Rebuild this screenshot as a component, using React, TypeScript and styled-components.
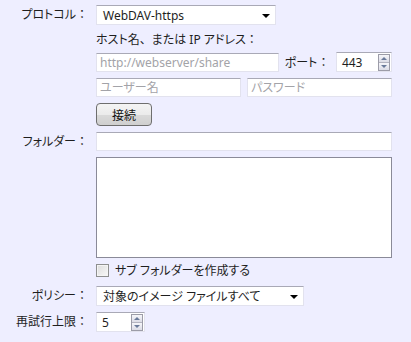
import React from "react";
import styled, { createGlobalStyle } from "styled-components";

const GlobalStyle = createGlobalStyle`
  body {
    margin: 0;
    background: #eeeeff;
    font-family: "Noto Sans", "Noto Sans CJK JP", sans-serif;
    font-size: 12px;
    color: #1e1e1e;
  }
`;

const Form = styled.div`
  display: grid;
  grid-template-columns: 88px 296px;
  column-gap: 8px;
  row-gap: 6px;
  align-items: center;
  padding-top: 5px;
`;

// proportional kana, punctuation kept full width outside of it
const P = styled.span`
  font-feature-settings: "palt";
`;

const Label = styled.div`
  text-align: right;
  white-space: nowrap;
  line-height: 16px;
`;

const Caption = styled.div`
  white-space: nowrap;
  height: 15px;
  line-height: 18px;
`;

const Sunken = styled.div<{ $w?: number; $h?: number }>`
  box-sizing: border-box;
  width: ${(p) => (p.$w ? `${p.$w}px` : "100%")};
  height: ${(p) => p.$h ?? 19}px;
  background: #fff;
  border: 1px solid #e2e2ee;
  border-top-color: #a9a9b6;
`;

const Input = styled.input<{ $w?: number }>`
  box-sizing: border-box;
  width: ${(p) => (p.$w ? `${p.$w}px` : "100%")};
  height: 19px;
  margin: 0;
  padding: 0 3px;
  background: #fff;
  border: 1px solid #e2e2ee;
  border-top-color: #a9a9b6;
  font: inherit;
  color: #1e1e1e;
  outline: none;
  font-feature-settings: "palt";
  &::placeholder {
    color: #a3a3a8;
  }
`;

const SelectBox = styled(Sunken)`
  display: flex;
  align-items: center;
  justify-content: space-between;
  padding: 0 5px 0 6px;
`;

const Arrow = styled.span`
  width: 0;
  height: 0;
  border-left: 4px solid transparent;
  border-right: 4px solid transparent;
  border-top: 4px solid #000;
  margin-top: 1px;
`;

const SpinBox = styled(Sunken)`
  display: flex;
  align-items: center;
  justify-content: space-between;
  padding: 0 1px 0 5px;
`;

const SpinButtons = styled.div`
  display: flex;
  flex-direction: column;
  width: 12px;
  height: 17px;
  border: 1px solid #9c9ca8;
  box-sizing: border-box;
`;

const SpinHalf = styled.div<{ $down?: boolean }>`
  flex: 1;
  display: flex;
  align-items: center;
  justify-content: center;
  background: linear-gradient(#f6f6fa, #dcdce6);
  border-top: ${(p) => (p.$down ? "1px solid #b4b4c0" : "none")};
  &::after {
    content: "";
    width: 0;
    height: 0;
    border-left: 3px solid transparent;
    border-right: 3px solid transparent;
    ${(p) =>
      p.$down
        ? "border-top: 3px solid #6a7a9a;"
        : "border-bottom: 3px solid #6a7a9a;"}
  }
`;

const Row = styled.div<{ $gap?: number }>`
  display: flex;
  align-items: center;
  gap: ${(p) => p.$gap ?? 6}px;
`;

const PortLabel = styled.span`
  white-space: nowrap;
  width: 46px;
`;

const Button = styled.button`
  box-sizing: border-box;
  width: 56px;
  height: 23px;
  margin: 0;
  border: 1px solid #6e6e6e;
  border-radius: 4px;
  background: linear-gradient(#f4f4f4 0%, #ebebeb 50%, #dadada 51%, #cfcfcf 100%);
  font: inherit;
  color: #111;
  padding: 0;
`;

const TextArea = styled.div`
  box-sizing: border-box;
  height: 101px;
  background: #fff;
  border: 1px solid #8a8a98;
`;

const CheckRow = styled.label`
  display: flex;
  align-items: center;
  gap: 6px;
  height: 16px;
  margin-top: -2px;
  margin-bottom: 2px;
`;

const CheckBox = styled.span`
  box-sizing: border-box;
  width: 13px;
  height: 13px;
  border: 1px solid #8e8f8f;
  background: linear-gradient(135deg, #dcdcdc, #f8f8f8);
  box-shadow: inset 0 0 0 1px #f4f4f4;
`;

const Spinner = ({ value, w }: { value: string; w: number }) => (
  <SpinBox $w={w} $h={20}>
    <span>{value}</span>
    <SpinButtons>
      <SpinHalf />
      <SpinHalf $down />
    </SpinButtons>
  </SpinBox>
);

const Select = ({ value, w }: { value: string; w: number }) => (
  <SelectBox $w={w} $h={20}>
    <P>{value}</P>
    <Arrow />
  </SelectBox>
);

const App = () => {
  return (
    <>
      <GlobalStyle />
      <Form>
        <Label>
          <P>プロトコル</P>：
        </Label>
        <Select value="WebDAV-https" w={180} />

        <span />
        <Caption>
          <P>ホスト名</P>、<P>または IP アドレス</P>：
        </Caption>

        <span />
        <Row>
          <Input $w={186} placeholder="http://webserver/share" />
          <PortLabel>
            <P>ポート</P>：
          </PortLabel>
          <Spinner value="443" w={57} />
        </Row>

        <span />
        <Row>
          <Input $w={145} placeholder="ユーザー名" />
          <Input $w={145} placeholder="パスワード" />
        </Row>

        <span />
        <Row>
          <Button>接続</Button>
        </Row>

        <Label>
          <P>フォルダー</P>：
        </Label>
        <Input />

        <span />
        <TextArea />

        <span />
        <CheckRow>
          <CheckBox />
          <P>サブ フォルダーを作成する</P>
        </CheckRow>

        <Label>
          <P>ポリシー</P>：
        </Label>
        <Select value="対象のイメージ ファイルすべて" w={208} />

        <Label>
          <P>再試行上限</P>：
        </Label>
        <Spinner value="5" w={49} />
      </Form>
    </>
  );
};

export default App;
